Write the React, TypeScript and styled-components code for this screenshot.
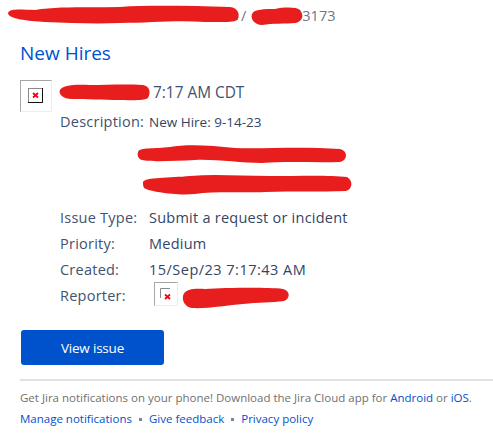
import React from "react";
import styled, { createGlobalStyle } from "styled-components";

const Global = createGlobalStyle`
  html, body { margin: 0; padding: 0; background: #fff; }
  body { font-family: "Open Sans", "Noto Sans", "Liberation Sans", sans-serif; }
`;

const Page = styled.div`
  position: relative;
  width: 493px;
  height: 434px;
  overflow: hidden;
  background: #fff;
`;

const Content = styled.div`
  display: flex;
  flex-direction: column;
  padding: 6px 0 0 20px;
`;

const Breadcrumb = styled.div`
  height: 20px;
  line-height: 20px;
  font-size: 14.5px;
  color: #6b778c;
  display: flex;
  padding-left: 221px;
`;

const Trail = styled.span`
  margin-left: 56px;
`;

const Title = styled.a`
  margin-top: 14px;
  height: 26px;
  line-height: 26px;
  font-size: 19px;
  color: #0052cc;
`;

const Activity = styled.div`
  margin-top: 14px;
  display: flex;
  gap: 8px;
`;

const Avatar = styled.div<{ $size: number }>`
  box-sizing: border-box;
  width: ${(p) => p.$size}px;
  height: ${(p) => p.$size}px;
  border: 1px solid;
  border-color: #a6a6a6 #ececec #ececec #a6a6a6;
  flex: none;
  display: flex;
  align-items: center;
  justify-content: center;
`;

const Broken = styled.svg`
  display: block;
`;

const Main = styled.div`
  display: flex;
  flex-direction: column;
`;

const Who = styled.div`
  height: 24px;
  line-height: 26px;
  font-size: 15.4px;
  color: #42526e;
  padding-left: 93px;
`;

const Fields = styled.div`
  display: flex;
  flex-direction: column;
  margin-top: 5px;
`;

const Field = styled.div<{ $h: number }>`
  display: flex;
  height: ${(p) => p.$h}px;
  line-height: ${(p) => p.$h}px;
  font-size: 14.5px;
  letter-spacing: 0.24px;
  color: #344563;
`;

const Label = styled.div`
  width: 89px;
  flex: none;
  color: #42526e;
`;

const Small = styled.span`
  font-size: 13.5px;
  letter-spacing: 0;
`;

const Stamp = styled.span`
  letter-spacing: 0.48px;
`;

const Gap = styled.div`
  height: 70px;
`;

const ReporterValue = styled.div`
  display: flex;
  align-items: center;
  padding: 0 0 4px 5px;
`;

const Button = styled.a`
  margin: 21px 0 0 1px;
  width: 143px;
  height: 35px;
  border-radius: 3px;
  background: #0052cc;
  color: #fff;
  font-size: 13.5px;
  letter-spacing: -0.2px;
  display: flex;
  align-items: center;
  justify-content: center;
`;

const Rule = styled.div`
  margin-top: 14px;
  height: 2px;
  background: #dfe1e6;
`;

const Footer = styled.div`
  margin-top: 7px;
  font-size: 11.5px;
  line-height: 20px;
  color: #707070;
`;

const Links = styled.div`
  margin-top: 1px;
  display: flex;
  align-items: center;
  gap: 7px;
`;

const Link = styled.a`
  color: #0052cc;
`;

const Dot = styled.span`
  width: 3px;
  height: 3px;
  background: #7a869a;
`;

const Redactions = styled.svg`
  position: absolute;
  inset: 0;
  pointer-events: none;
`;

const FooterRow = styled.div`
  white-space: nowrap;
`;

function BrokenImage({ large }: { large?: boolean }) {
  return large ? (
    <Broken width="16" height="16" viewBox="0 0 16 16">
      <rect x="0.5" y="0.5" width="14" height="14" fill="#fff" stroke="#8a8a8a" />
      <path d="M0 14.5H14.5V0" fill="none" stroke="#111" />
      <path d="M5 5L10 9.5M10 5L5 9.5" stroke="#f00010" strokeWidth="1.7" />
    </Broken>
  ) : (
    <Broken width="18" height="18" viewBox="0 0 18 18">
      <path d="M3.5 13V3.5H13" fill="none" stroke="#8a8a8a" />
      <path d="M8 9.5L13 14M13 9.5L8 14" stroke="#f00010" strokeWidth="1.7" />
    </Broken>
  );
}

export default function App() {
  return (
    <Page>
      <Global />
      <Content>
        <Breadcrumb>
          <span>/</span>
          <Trail>3173</Trail>
        </Breadcrumb>
        <Title>New Hires</Title>
        <Activity>
          <Avatar $size={32}>
            <BrokenImage large />
          </Avatar>
          <Main>
            <Who>7:17 AM CDT</Who>
            <Fields>
              <Field $h={26}>
                <Label>Description:</Label>
                <Small>New Hire: 9-14-23</Small>
              </Field>
              <Gap />
              <Field $h={26}>
                <Label>Issue Type:</Label>
                Submit a request or incident
              </Field>
              <Field $h={26}>
                <Label>Priority:</Label>
                Medium
              </Field>
              <Field $h={26}>
                <Label>Created:</Label>
                <Stamp>15/Sep/23 7:17:43 AM</Stamp>
              </Field>
              <Field $h={26}>
                <Label>Reporter:</Label>
                <ReporterValue>
                  <Avatar $size={24}>
                    <BrokenImage />
                  </Avatar>
                </ReporterValue>
              </Field>
            </Fields>
          </Main>
        </Activity>
        <Button>View issue</Button>
        <Rule />
        <Footer>
          <FooterRow>
            Get Jira notifications on your phone! Download the Jira Cloud app for <Link>Android</Link> or <Link>iOS</Link>.
          </FooterRow>
          <Links>
            <Link>Manage notifications</Link>
            <Dot />
            <Link>Give feedback</Link>
            <Dot />
            <Link>Privacy policy</Link>
          </Links>
        </Footer>
      </Content>
      <Redactions width="493" height="434" viewBox="0 0 493 434">
        <g fill="#e81e1e">
          <path d="M8 13C10 8 22 10 35 10C60 6 90 8 120 7C150 5 190 6 230 7C238 8 240 14 238 19C236 23 222 22 205 22C175 20 150 23 120 23C95 24 70 23 45 22C28 21 8 19 8 13Z" />
          <path d="M252 14C254 9 265 9 275 9C285 7 296 7 300 10C304 15 303 21 296 23C285 24 272 23 262 25C255 25 250 19 252 14Z" />
          <path d="M60 90C62 85 75 84 90 85C105 85 125 84 143 85C150 86 151 93 148 98C145 101 128 100 118 100C105 100 85 99 72 99C63 99 58 94 60 90Z" />
          <path d="M138 152C139 147 155 149 170 147C185 144 210 145 235 148C265 149 300 146 340 149C348 151 348 160 340 162C315 163 290 161 262 163C240 163 215 159 195 160C175 161 150 162 142 160C138 159 137 155 138 152Z" />
          <path d="M143 182C145 177 170 178 190 176C215 174 240 176 270 176C300 176 330 175 347 177C353 180 353 189 346 191C320 192 295 191 265 192C245 193 215 191 195 194C175 196 150 191 146 189C143 188 143 185 143 182Z" />
          <path d="M183 296C184 289 195 288 205 289C225 288 265 287 283 289C291 291 290 299 284 301C272 303 258 302 243 304C228 305 207 309 192 308C185 307 182 301 183 296Z" />
        </g>
      </Redactions>
    </Page>
  );
}
